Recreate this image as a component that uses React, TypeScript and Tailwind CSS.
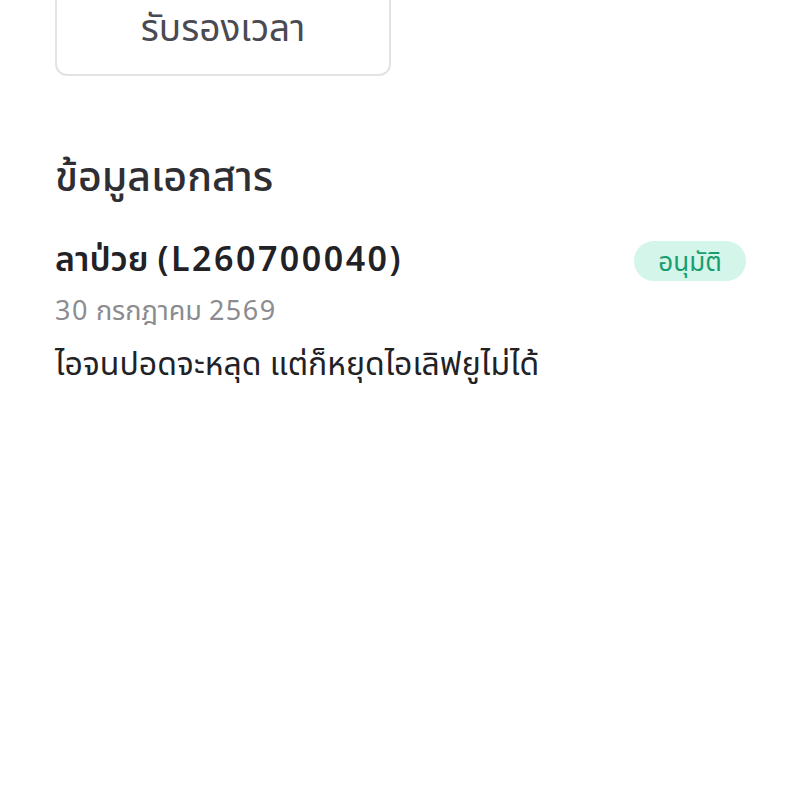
export default function App() {
  return (
    <div
      className="w-full min-h-screen bg-white"
      style={{ fontFamily: '"Noto Sans", "Noto Sans Thai", sans-serif' }}
    >
      <div className="px-[55px] -mt-[20px]">
        <button className="w-[336px] h-[96px] rounded-[12px] border-2 border-[#e3e3e6] bg-white text-[37px] leading-[40px] text-[#4a4a52] flex items-center justify-center pb-[3px]">
          รับรองเวลา
        </button>

        <h2 className="mt-[75px] text-[41px] font-medium text-[#2e2e33] leading-[48px]">
          ข้อมูลเอกสาร
        </h2>

        <div className="mt-[39px] flex items-start justify-between">
          <div className="text-[34px] font-semibold text-[#222226] leading-[40px]">
            ลาป่วย <span className="tracking-[2.5px]">(L260700040)</span>
          </div>
          <span className="mt-[3px] h-[40px] w-[112px] mr-[-1px] justify-center rounded-full bg-[#d4f5e9] text-[#189d71] text-[26px] flex items-center">
            อนุมัติ
          </span>
        </div>

        <div className="mt-[11px] text-[27px] text-[#8b8b90] leading-[36px]">
          <span className="tracking-[1.5px]">30</span> กรกฎาคม{" "}
          <span className="tracking-[1.5px]">2569</span>
        </div>

        <p className="mt-[15px] text-[32px] text-[#222226] leading-[40px]">
          ไอจนปอดจะหลุด แต่ก็หยุดไอเลิฟยูไม่ได้
        </p>
      </div>
    </div>
  );
}
